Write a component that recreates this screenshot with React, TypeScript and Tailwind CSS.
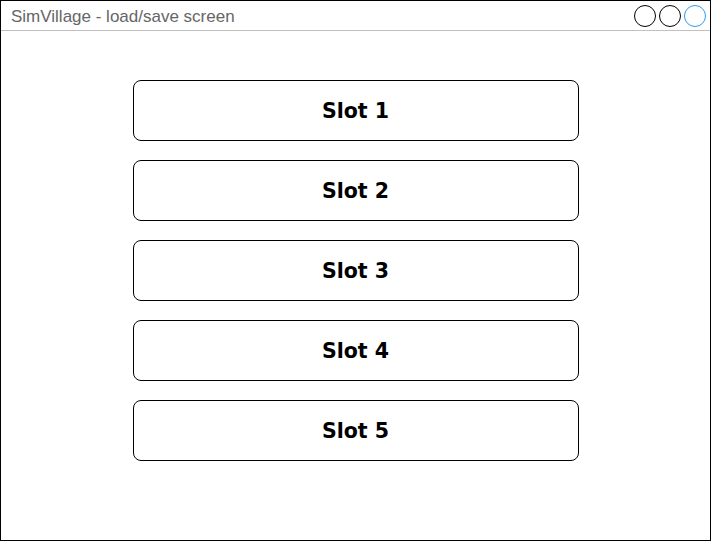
import React from "react";

export default function App() {
  const slots = ["Slot 1", "Slot 2", "Slot 3", "Slot 4", "Slot 5"];
  return (
    <div className="w-[711px] h-[541px] border border-black bg-white flex flex-col overflow-hidden">
      <div className="h-[30px] shrink-0 border-b border-[#c0c0c0] flex items-center justify-between pl-[10px] pr-[4px]">
        <span className="text-[17px] text-[#666666] leading-none mt-[1px]" style={{ fontFamily: '"Liberation Sans", Arial, sans-serif' }}>
          SimVillage - load/save screen
        </span>
        <div className="flex items-center gap-[3px] mt-[1px]">
          <div className="w-[22px] h-[22px] rounded-full border border-black" />
          <div className="w-[22px] h-[22px] rounded-full border border-black" />
          <div className="w-[22px] h-[22px] rounded-full border border-[#2f9bf5]" />
        </div>
      </div>
      <div className="flex flex-col items-center pt-[49px] pl-[1px] pr-[1px] gap-[19px]">
        {slots.map((s) => (
          <div
            key={s}
            className="w-[446px] h-[61px] rounded-[8px] border border-black flex items-center justify-center pt-[2px] text-[20.5px] font-bold text-black"
            style={{ fontFamily: '"DejaVu Sans", Verdana, sans-serif' }}
          >
            {s}
          </div>
        ))}
      </div>
    </div>
  );
}
